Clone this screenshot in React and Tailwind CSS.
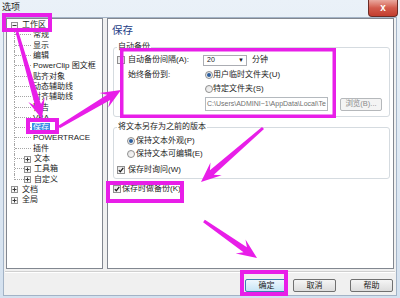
import React from "react";

const MAG = "#e81ee8";

// arrow polygon: tapered shaft with a swept-back head
function arrow(x1, y1, x2, y2, hl = 20, hw = 17) {
  const L = Math.hypot(x2 - x1, y2 - y1);
  const ux = (x2 - x1) / L, uy = (y2 - y1) / L;
  const px = -uy, py = ux;
  const p = (d, s) => `${(x2 - ux * d + px * s).toFixed(1)},${(y2 - uy * d + py * s).toFixed(1)}`;
  const tail = (s) => `${(x1 + px * s).toFixed(1)},${(y1 + py * s).toFixed(1)}`;
  return [tail(1.5), p(hl * 0.72, 3), p(hl, hw / 2), p(0, 0), p(hl, -hw / 2), p(hl * 0.72, -3), tail(-1.5)].join(" ");
}

function Box({ open }) {
  return (
    <svg width="7" height="7" viewBox="0 0 7 7" className="shrink-0">
      <rect x="0.5" y="0.5" width="6" height="6" fill="#f7f7f7" stroke="#939393" />
      <path d="M1.5 3.5h4" stroke="#3a3a3a" />
      {!open && <path d="M3.5 1.5v4" stroke="#3a3a3a" />}
    </svg>
  );
}

function Check({ on }) {
  return (
    <div className="w-[8px] h-[8px] shrink-0 border border-[#8f8f8f] bg-linear-to-br from-[#e4e4e4] to-[#fbfbfb] flex items-center justify-center">
      {on && (
        <svg width="6" height="6" viewBox="0 0 6 6">
          <path d="M0.8 3.1l1.5 1.6 3-3.9" fill="none" stroke="#1d1d1d" strokeWidth="1.2" />
        </svg>
      )}
    </div>
  );
}

function Radio({ on }) {
  return (
    <div className="w-[8px] h-[8px] shrink-0 rounded-full border border-[#8f8f8f] bg-linear-to-br from-[#e2e2e2] to-[#fbfbfb] flex items-center justify-center">
      {on && <div className="w-[4px] h-[4px] rounded-full bg-[#2d5f9e]" />}
    </div>
  );
}

function Root({ t, open }) {
  return (
    <div className="flex items-center h-[10.3px] pl-[4px]">
      <Box open={open} />
      <span className="ml-[4px] leading-[10px]">{t}</span>
    </div>
  );
}

function Child({ t, sel, exp, last }) {
  return (
    <div className="flex h-[10.3px]">
      <div className="w-[7px] shrink-0" />
      <div className={`w-0 border-l border-dotted border-[#a5a5a5] ${last ? "h-1/2" : "h-full"}`} />
      <div className={`flex flex-col shrink-0 ${exp ? "w-[9px]" : "w-[16px]"}`}>
        <div className="h-1/2 border-b border-dotted border-[#a5a5a5]" />
      </div>
      {exp ? (
        <div className="flex items-center">
          <Box />
          <span className="ml-[3px] leading-[10px]">{t}</span>
        </div>
      ) : (
        <div className="flex items-center">
          <span className={`ml-[1px] px-[1px] leading-[10px] whitespace-nowrap ${sel ? "bg-[#3a8ee6] text-white" : ""}`}>{t}</span>
        </div>
      )}
    </div>
  );
}

function Btn({ children, def, cls = "" }) {
  return (
    <div
      className={`h-[13px] w-[43px] flex items-center justify-center rounded-[2px] border text-[8px] leading-none ${
        def ? "border-[#3c7fb1] bg-linear-to-b from-[#eef7fd] to-[#c6e4f5]" : "border-[#707070] bg-linear-to-b from-[#f5f5f5] to-[#dcdcdc]"
      } ${cls}`}
    >
      {children}
    </div>
  );
}

const children = [
  { t: "常规" },
  { t: "显示" },
  { t: "编辑" },
  { t: "PowerClip 图文框", latin: true },
  { t: "贴齐对象" },
  { t: "动态辅助线" },
  { t: "对齐辅助线" },
  { t: "警告" },
  { t: "VBA" },
  { t: "保存", sel: true },
  { t: "POWERTRACE" },
  { t: "插件" },
  { t: "文本", exp: true },
  { t: "工具箱", exp: true },
  { t: "自定义", exp: true, last: true },
];

export default function App() {
  return (
    <div className="relative w-[400px] h-[298px] overflow-hidden bg-linear-to-b from-[#eaf1f8] to-[#d4e1ef] text-[#1b1b1b] font-[family-name:'Liberation_Sans','Noto_Sans_CJK_SC',sans-serif]">
      {/* Title bar */}
      <div className="h-[17px] flex justify-between items-start">
        <span className="pl-[2px] pt-[2px] text-[9px] leading-[10px]">选项</span>
        <div className="mr-[2px] w-[30px] h-[17px] rounded-b-[4px] border border-t-0 border-[#6b2b25] bg-linear-to-b from-[#e9a89f] via-[#d25a4c] to-[#c23d2e] flex items-center justify-center text-white text-[10px] font-bold leading-none">
          x
        </div>
      </div>

      {/* Client */}
      <div className="ml-[3px] w-[394px] h-[279px] border border-[#a3b3c6] bg-[#f0f0f0] flex flex-col">
        <div className="flex pl-[2px]">
          {/* Tree */}
          <div className="w-[97px] h-[251px] border border-[#828790] bg-white pt-[1px] text-[8px]">
            <Root t="工作区" open />
            {children.map((c) => (
              <Child key={c.t} {...c} />
            ))}
            <Root t="文档" />
            <Root t="全局" />
          </div>

          {/* Settings page */}
          <div className="ml-[4px] w-[287px] h-[251px] border border-[#828790] bg-white text-[8px]">
            <div className="pl-[4px] pt-[5px] text-[10.5px] leading-[12px] text-[#1e3e86]">保存</div>

            <fieldset className="ml-[5px] mr-[3px] mt-[6px] border border-[#d5dbe0] rounded-[3px] p-0 pb-[5px]">
              <legend className="ml-[3px] px-[1px] leading-[10px]">自动备份</legend>
              <div className="flex items-center h-[12px] mt-[2px] pl-[3px]">
                <Check />
                <span className="ml-[3px] w-[75px] leading-[12px]">自动备份间隔(A):</span>
                <div className="w-[44px] h-[11px] border border-[#abadb3] bg-white flex items-center justify-between pl-[3px] pr-[2px] text-[7px]">
                  <span>20</span>
                  <span className="text-[6px]">▼</span>
                </div>
                <span className="ml-[5px]">分钟</span>
              </div>
              <div className="flex mt-[3px]">
                <div className="w-[89px] pl-[14px] leading-[12px]">始终备份到:</div>
                <div className="ml-[2px] flex flex-col">
                  <div className="flex items-center h-[12px]">
                    <Radio on />
                    <span>用户临时文件夹(U)</span>
                  </div>
                  <div className="flex items-center h-[12px] mt-[2px]">
                    <Radio />
                    <span>特定文件夹(S)</span>
                  </div>
                  <div className="flex items-center mt-[2px]">
                    <div className="w-[123px] h-[14px] border border-[#b4b9be] bg-white flex items-center pl-[1px] overflow-hidden whitespace-nowrap text-[7px] text-[#6f6f6f]">
                      C:\Users\ADMINI~1\AppData\Local\Te
                    </div>
                    <div className="ml-[12px] w-[42px] h-[13px] rounded-[2px] border border-[#b5b8bb] bg-[#f4f4f4] flex items-center justify-center text-[7.5px] text-[#8a8a8a]">
                      浏览(B)...
                    </div>
                  </div>
                </div>
              </div>
            </fieldset>

            <fieldset className="ml-[5px] mr-[3px] mt-[5px] border border-[#d5dbe0] rounded-[3px] p-0 pb-[2px]">
              <legend className="ml-[3px] px-[1px] leading-[10px]">将文本另存为之前的版本</legend>
              <div className="flex items-center h-[12px] mt-[3px] pl-[13px]">
                <Radio on />
                <span className="ml-[1px]">保持文本外观(P)</span>
              </div>
              <div className="flex items-center h-[12px] mt-[1px] pl-[13px]">
                <Radio />
                <span className="ml-[1px]">保持文本可编辑(E)</span>
              </div>
              <div className="flex items-center h-[12px] mt-[4px] pl-[3px]">
                <Check on />
                <span className="ml-[3px]">保存时询问(W)</span>
              </div>
            </fieldset>

            <div className="flex items-center h-[12px] mt-[4px] ml-[5px]">
              <Check on />
              <span className="ml-[1px]">保存时做备份(K)</span>
            </div>
          </div>
        </div>

        <div className="mt-[2px] mx-[1px] h-[2px] border-t border-[#d0d0d0] bg-white" />

        <div className="flex justify-end mt-[6px] pr-[3px]">
          <Btn def>确定</Btn>
          <Btn cls="ml-[5px]">取消</Btn>
          <Btn cls="ml-[14px]">帮助</Btn>
        </div>
      </div>

      {/* annotation overlay */}
      <svg className="absolute inset-0 pointer-events-none" width="400" height="298">
        <g fill="none" stroke={MAG}>
          <rect x="4" y="15" width="46" height="15" strokeWidth="4" />
          <rect x="28" y="120" width="29" height="12" strokeWidth="4" />
          <rect x="121.75" y="49.75" width="212.5" height="66.5" strokeWidth="3.5" />
          <rect x="108" y="183" width="74" height="18" strokeWidth="4" />
          <rect x="242" y="272" width="44" height="22" strokeWidth="4" />
        </g>
        <g fill={MAG}>
          <polygon points={arrow(17, 32, 42, 119)} />
          <polygon points={arrow(59, 127, 121, 90)} />
          <polygon points={arrow(263, 128, 201, 182)} />
          <polygon points={arrow(204, 221, 257, 258)} />
        </g>
      </svg>
    </div>
  );
}
